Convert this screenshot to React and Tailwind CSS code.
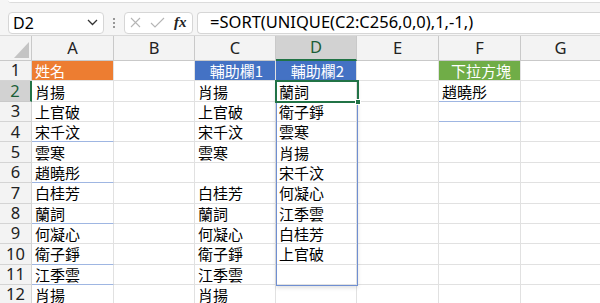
import React from "react";

const cols = ["A", "B", "C", "D", "E", "F", "G"];

const rows = [
  { a: "姓名", c: "輔助欄1", d: "輔助欄2", f: "下拉方塊" },
  { a: "肖揚", c: "肖揚", d: "蘭詞", f: "趙曉彤" },
  { a: "上官破", c: "上官破", d: "衛子錚" },
  { a: "宋千汶", c: "宋千汶", d: "雲寒" },
  { a: "雲寒", c: "雲寒", d: "肖揚" },
  { a: "趙曉彤", c: "", d: "宋千汶" },
  { a: "白桂芳", c: "白桂芳", d: "何凝心" },
  { a: "蘭詞", c: "蘭詞", d: "江季雲" },
  { a: "何凝心", c: "何凝心", d: "白桂芳" },
  { a: "衛子錚", c: "衛子錚", d: "上官破" },
  { a: "江季雲", c: "江季雲", d: "" },
  { a: "肖揚", c: "肖揚", d: "" },
];

// rows in column A whose bottom line shows the pale blue border
const blueA = [4, 6, 8, 10, 11];

const cjk = { fontFamily: '"Noto Sans CJK TC", "Noto Sans", sans-serif' };
const ui = { fontFamily: '"Noto Sans", "Open Sans", sans-serif' };

const Cell = ({ children, className = "" }) => (
  <div
    className={`flex items-center overflow-hidden whitespace-nowrap border-b border-r border-[#e1e1e1] pl-[3px] text-[15px] leading-none text-black ${className}`}
    style={cjk}
  >
    {children}
  </div>
);

const FormulaBar = () => (
  <div className="h-[35px] bg-[#f5f5f5] relative" style={ui}>
    <div className="h-[3px] ml-[8px] bg-white border-b border-[#dcdcdc] rounded-bl-[4px]"></div>
    <div className="flex items-center h-[32px] pt-[8px] pb-[1px]">
      <div className="ml-[8px] w-[96px] h-[22px] bg-white border border-[#d6d6d6] rounded-[4px] flex items-center justify-between px-[4px]">
        <span className="text-[16px] text-black leading-none">D2</span>
        <svg width="11" height="7" viewBox="0 0 11 7" className="mr-[1px]">
          <path d="M1 1l4.5 4.5L10 1" fill="none" stroke="#333" strokeWidth="1.3" />
        </svg>
      </div>
      <div className="w-[20px] flex flex-col items-center gap-[2px]">
        <span className="w-[2px] h-[2px] bg-[#777] rounded-full"></span>
        <span className="w-[2px] h-[2px] bg-[#777] rounded-full"></span>
        <span className="w-[2px] h-[2px] bg-[#777] rounded-full"></span>
      </div>
      <div className="w-[69px] h-[22px] bg-white border border-[#d6d6d6] rounded-[4px] flex items-center pl-[5px] gap-[9px]">
        <svg width="11" height="11" viewBox="0 0 11 11">
          <path d="M1 1l9 9M10 1l-9 9" stroke="#b5b5b5" strokeWidth="1.1" fill="none" />
        </svg>
        <svg width="15" height="11" viewBox="0 0 15 11">
          <path d="M1 6l4 4L14 1" stroke="#b5b5b5" strokeWidth="1.1" fill="none" />
        </svg>
        <span
          className="text-[15px] italic font-bold text-[#222] leading-none"
          style={{ fontFamily: '"Liberation Serif", serif' }}
        >
          fx
        </span>
      </div>
      <div className="ml-[4px] flex-1 h-[22px] bg-white border border-[#d6d6d6] rounded-l-[4px] border-r-0 flex items-center pl-[12px]">
        <span className="text-[16.5px] text-black leading-none">=SORT(UNIQUE(C2:C256,0,0),1,-1,)</span>
      </div>
    </div>
  </div>
);

export default function App() {
  return (
    <div className="w-[600px] h-[303px] overflow-hidden bg-white">
      <FormulaBar />
      <div className="relative border-t border-[#d9d9d9]">
        <div className="grid grid-cols-[32px_82px_81px_81px_81px_82px_82px_80px] grid-rows-[25px_repeat(12,20.36px)]">
          {/* corner */}
          <div className="bg-[#f3f3f3] border-b border-r border-[#c9c9c9] flex items-end justify-end pr-[2px] pb-[2px]">
            <svg width="15" height="16" viewBox="0 0 15 16">
              <path d="M15 0V16H0Z" fill="#c4c4c4" />
            </svg>
          </div>
          {cols.map((c) =>
            c === "D" ? (
              <div
                key={c}
                className="bg-[#d2d2d2] border-b-2 border-b-[#217346] border-r border-r-[#c9c9c9] flex items-center justify-center text-[16.5px] leading-none text-[#1b5e37]"
                style={ui}
              >
                {c}
              </div>
            ) : (
              <div
                key={c}
                className="bg-[#f3f3f3] border-b border-r border-[#c9c9c9] flex items-center justify-center text-[16.5px] leading-none text-[#222]"
                style={ui}
              >
                {c}
              </div>
            )
          )}
          {rows.map((r, i) => {
            const n = i + 1;
            const first = n === 1;
            return (
              <React.Fragment key={n}>
                {n === 2 ? (
                  <div
                    className="bg-[#d2d2d2] border-b border-[#c9c9c9] border-r-2 border-r-[#217346] flex items-center justify-center text-[16.5px] leading-none text-[#1b5e37]"
                    style={ui}
                  >
                    {n}
                  </div>
                ) : (
                  <div
                    className="bg-[#f3f3f3] border-b border-r border-[#d4d4d4] flex items-center justify-center text-[16.5px] leading-none text-[#222]"
                    style={ui}
                  >
                    {n}
                  </div>
                )}
                {first ? (
                  <Cell className="bg-[#ed7d31] text-white">{r.a}</Cell>
                ) : (
                  <Cell className={blueA.includes(n) ? "border-b-[#9fb6e2]" : ""}>{r.a}</Cell>
                )}
                <Cell />
                {first ? (
                  <Cell className="bg-[#4472c4] text-white justify-center pl-0">{r.c}</Cell>
                ) : (
                  <Cell>{r.c}</Cell>
                )}
                {first ? (
                  <Cell className="bg-[#4472c4] text-white justify-center pl-0">{r.d}</Cell>
                ) : (
                  <Cell>{r.d}</Cell>
                )}
                <Cell />
                {first ? (
                  <Cell className="bg-[#70ad47] text-white justify-center pl-0">{r.f}</Cell>
                ) : (
                  <Cell className={n === 2 || n === 3 ? "border-b-[#9fb6e2]" : ""}>{r.f}</Cell>
                )}
                <Cell />
              </React.Fragment>
            );
          })}
        </div>
        {/* spill range outline D2:D11 */}
        <div className="absolute left-[276px] top-[45.36px] w-[82px] h-[204.6px] border border-[#6f8fd2] shadow-[0_2px_4px_rgba(0,0,0,0.12)] pointer-events-none"></div>
        {/* active cell D2 */}
        <div className="absolute left-[275px] top-[44.36px] w-[84px] h-[22.4px] border-2 border-[#217346] pointer-events-none">
          <div className="absolute right-[-4px] bottom-[-4px] w-[6px] h-[6px] bg-[#217346] border border-white"></div>
        </div>
      </div>
    </div>
  );
}
